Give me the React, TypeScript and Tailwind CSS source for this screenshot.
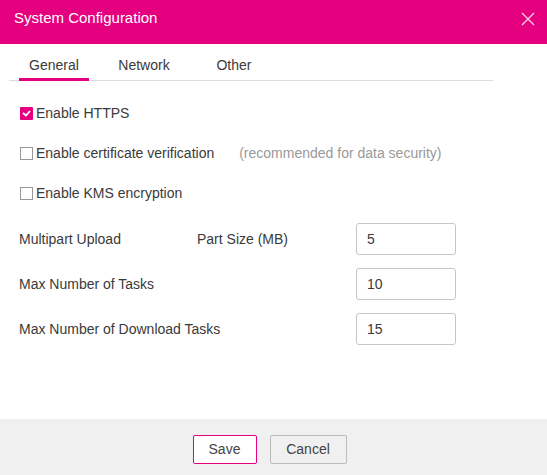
import { useState } from "react";

function Check({ checked }: { checked: boolean }) {
  return checked ? (
    <span className="w-[13px] h-[13px] bg-[#e4007f] flex items-center justify-center rounded-[1px]">
      <svg width="9" height="7" viewBox="0 0 9 7">
        <path d="M1 3 L4 5.5 L8 1" stroke="white" strokeWidth="1.8" fill="none" />
      </svg>
    </span>
  ) : (
    <span className="w-[13px] h-[13px] border border-[#999] bg-white" />
  );
}

const rows = [
  { label: "Max Number of Tasks", value: "10" },
  { label: "Max Number of Download Tasks", value: "15" },
];

export default function App() {
  const [tab] = useState("General");
  return (
    <div className="w-[547px] h-[475px] bg-white flex flex-col text-[#3a3a3a] text-[14px]" style={{ fontFamily: '"Liberation Sans", Arial, sans-serif' }}>
      <header className="h-[44px] bg-[#e4007f] flex items-center justify-between pl-[14px] pr-[12px] pb-[7px] text-white">
        <h1 className="text-[15px]">System Configuration</h1>
        <svg width="14" height="14" viewBox="0 0 14 14" className="opacity-80">
          <path d="M1 1 L13 13 M13 1 L1 13" stroke="white" strokeWidth="1.4" />
        </svg>
      </header>

      <main className="flex-1 px-[9px]">
        <nav className="w-[484px] border-b border-[#ddd] flex h-[37px] items-end">
          {["General", "Network", "Other"].map((t, i) => (
            <div
              key={t}
              className={`h-[29px] flex items-center justify-center border-b-[3px] -mb-[1px] ${tab === t ? "border-[#e4007f]" : "border-transparent"} ${i === 0 ? "w-[70px] ml-[10px]" : ""} ${i === 1 ? "w-[80px] ml-[15px]" : ""} ${i === 2 ? "w-[60px] ml-[20px]" : ""}`}
            >
              {t}
            </div>
          ))}
        </nav>

        <div className="pl-[11px] pt-[23px] flex flex-col gap-[22px]">
          <label className="flex items-center gap-[3px] h-[18px]">
            <Check checked />
            <span>Enable HTTPS</span>
          </label>
          <label className="flex items-center gap-[3px] h-[18px]">
            <Check checked={false} />
            <span>Enable certificate verification</span>
            <span className="ml-[22px] text-[#999]">(recommended for data security)</span>
          </label>
          <label className="flex items-center gap-[3px] h-[18px]">
            <Check checked={false} />
            <span>Enable KMS encryption</span>
          </label>
        </div>

        <div className="pl-[10px] pt-[21px] flex flex-col gap-[13px]">
          <div className="flex items-center">
            <span className="w-[178px]">Multipart Upload</span>
            <span className="w-[159px]">Part Size (MB)</span>
            <div className="w-[100px] h-[32px] border border-[#c6c6c6] rounded-[3px] flex items-center px-[10px]">5</div>
          </div>
          {rows.map((r) => (
            <div key={r.label} className="flex items-center">
              <span className="w-[337px]">{r.label}</span>
              <div className="w-[100px] h-[32px] border border-[#c6c6c6] rounded-[3px] flex items-center px-[10px]">{r.value}</div>
            </div>
          ))}
        </div>
      </main>

      <footer className="h-[56px] bg-[#f0f0f0] flex items-center justify-center gap-[13px] pt-[5px] pr-[8px]">
        <button className="w-[64px] h-[29px] bg-white border border-[#e4007f] rounded-[2px] text-[#444]">Save</button>
        <button className="w-[77px] h-[29px] bg-[#f0f0f0] border border-[#bbb] rounded-[2px] text-[#444]">Cancel</button>
      </footer>
    </div>
  );
}
